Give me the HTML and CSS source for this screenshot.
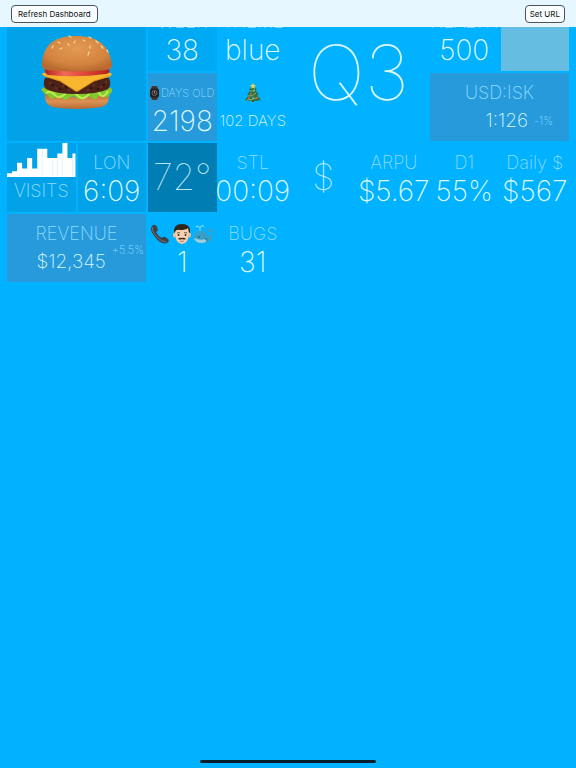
FILE: index.html
```html
<!DOCTYPE html>
<html lang="en">
<head>
<meta charset="utf-8">
<meta name="viewport" content="width=device-width, initial-scale=1">
<title>Dashboard</title>
<link rel="stylesheet" href="styles.css">
</head>
<body>
<header class="toolbar">
  <button type="button" class="button">Refresh Dashboard</button>
  <button type="button" class="button">Set URL</button>
</header>

<main class="board">
  <section class="tile tile-large tile-deep">
    <svg class="burger" viewBox="0 0 72 74" role="img" aria-label="Hamburger">
      <defs>
        <radialGradient id="bun" cx=".5" cy=".35" r=".65"><stop offset="0" stop-color="#e39a52"/><stop offset=".7" stop-color="#d3843f"/><stop offset="1" stop-color="#b96a30"/></radialGradient>
        <linearGradient id="base" x2="0" y2="1"><stop offset="0" stop-color="#bd7136"/><stop offset=".5" stop-color="#dc9153"/><stop offset="1" stop-color="#b56a35"/></linearGradient>
        <linearGradient id="tomato"><stop offset="0" stop-color="#b32219"/><stop offset=".3" stop-color="#f2695b"/><stop offset=".6" stop-color="#e2473c"/><stop offset="1" stop-color="#b32219"/></linearGradient>
      </defs>
      <path d="M4 59Q36 65 68 59Q69 69 61 72Q36 76 11 72Q3 69 4 59Z" fill="url(#base)"/>
      <path d="M2 53Q36 45 70 53Q73 56 69 59Q66 65 63 60Q59 59 56 63Q53 66 50 62Q45 60 42 63Q39 67 35 62Q31 60 28 63Q24 67 20 62Q15 60 13 63Q9 65 7 60Q4 60 2 57L0 55Z" fill="#83c82d"/>
      <path d="M5 58Q10 55 14 60T24 59T36 60T48 59T58 58T67 56" fill="none" stroke="#b9ef50" stroke-width="2"/>
      <path d="M4 43Q36 37 68 43Q71 50 67 54Q58 59 36 59T5 54Q1 50 4 43Z" fill="#4b2118"/>
      <g fill="#65311f"><circle cx="9" cy="48" r="1.500"/><circle cx="15" cy="53" r="1.500"/><circle cx="22" cy="51" r="1.500"/><circle cx="28" cy="55" r="1.500"/><circle cx="47" cy="55" r="1.500"/><circle cx="53" cy="50" r="1.500"/><circle cx="60" cy="52" r="1.500"/><circle cx="65" cy="47" r="1.500"/></g>
      <g fill="#28110e"><circle cx="12" cy="50" r="1"/><circle cx="19" cy="54" r="1"/><circle cx="25" cy="52" r="1"/><circle cx="50" cy="53" r="1"/><circle cx="57" cy="54" r="1"/><circle cx="63" cy="50" r="1"/></g>
      <path d="M2 38Q36 33 70 38Q72 40 68 42L53 46L37 56Q35 57 33 55L19 46L3 41Q0 39 2 38Z" fill="#f8b52e"/>
      <path d="M3 41L19 46L33 55Q35 57 37 56L53 46L69 41" fill="none" stroke="#e29018"/>
      <path d="M4 34Q36 31 68 34Q70 38 65 39Q36 43 7 40Q3 38 4 34Z" fill="url(#tomato)"/>
      <path d="M1 29C2 13 10 1 34 1C61 0 69 15 71 29Q72 34 65 35Q36 38 7 35Q0 34 1 29Z" fill="url(#bun)"/>
      <g stroke="#f4d69b" stroke-width="1.300" stroke-linecap="round"><path d="M17 7l2 1M12 11l-1 2M21 13l-2 1M28 1l2 1M34 6l-1 2M27 9l1 1M42 5l2 1M48 2l2 1M55 6l2 2M49 11v2M60 11l2 2M48 17l-1 3M66 15l1 2"/></g>
    </svg>
  </section>
  <section class="tile tile-soft"><h2 class="label">WEEK</h2><p class="value">38</p></section>
  <section class="tile"><h2 class="label">THEME</h2><p class="value">blue</p></section>
  <section class="tile tile-large"><p class="headline">Q3</p></section>
  <section class="tile"><h2 class="label">HEALTH</h2><p class="value">500</p></section>
  <section class="tile tile-pale"></section>

  <section class="tile tile-slate">
    <h2 class="label label-small">
      <svg class="watch" viewBox="0 0 9 14" role="img" aria-label="Watch"><path d="M2 0h5l1 3v8l-1 3H2l-1-3V3Z" fill="#44352f"/><rect y="2.500" width="9" height="9" rx="2" fill="#252024"/><circle cx="4.500" cy="7" r="2.500" fill="none" stroke="#8b8580" stroke-width=".7"/><path d="M4.500 5v2l1 1" fill="none" stroke="#d8c8b4" stroke-width=".6"/></svg>
      DAYS OLD
    </h2>
    <p class="value">2198</p>
  </section>
  <section class="tile">
    <svg class="tree" viewBox="0 0 16 20" role="img" aria-label="Christmas tree"><path d="M7 16h2v3H7Z" fill="#70452b"/><path d="M8 2L12 7L10.500 7L14 12L12 12L16 17Q8 19 0 17L4 12H2L5.500 7H4Z" fill="#2b7041"/><path d="M5 8q3 1 5-2M3 13q5 1 8-3M2 17q6 0 11-3" fill="none" stroke="#9bad58"/><path d="M8 0l1 2 2 .3-1.500 1.400.3 2L8 4.700l-1.800 1 .3-2L5 2.300 7 2Z" fill="#ecd35b"/><g fill="#e3574f"><circle cx="6" cy="11" r="1"/><circle cx="12" cy="15" r="1"/><circle cx="4" cy="15" r="1"/></g><g fill="#7fdded"><circle cx="9" cy="8" r=".8"/><circle cx="8" cy="15" r=".8"/></g></svg>
    <p class="value value-small">102 DAYS</p>
  </section>
  <section class="tile tile-wide tile-slate">
    <h2 class="label">USD:ISK</h2>
    <p class="rate"><span>1:126</span><small>-1%</small></p>
  </section>

  <section class="tile tile-deep tile-chart">
    <svg class="chart" viewBox="0 0 68 36" preserveAspectRatio="none" aria-hidden="true"><path d="M0 36V32H5V30H10V21H15V27H20V16H25V27H30V6H40V16H50V11H55V0H60V16H65V11H68V36Z" fill="#fff"/><path d="M35 7V35M45 18V35M50 18V35M55 12V35M65 18V35" stroke="#bfe8fa" stroke-width=".5"/></svg>
    <h2 class="label">VISITS</h2>
  </section>
  <section class="tile tile-deep"><h2 class="label">LON</h2><p class="value">6:09</p></section>
  <section class="tile tile-dark"><p class="figure">72°</p></section>
  <section class="tile"><h2 class="label">STL</h2><p class="value">00:09</p></section>
  <section class="tile"><p class="figure">$</p></section>
  <section class="tile"><h2 class="label">ARPU</h2><p class="value">$5.67</p></section>
  <section class="tile"><h2 class="label">D1</h2><p class="value">55%</p></section>
  <section class="tile"><h2 class="label">Daily $</h2><p class="value">$567</p></section>

  <section class="tile tile-wide tile-slate">
    <h2 class="label">REVENUE</h2>
    <p class="rate rate-raised"><span>$12,345</span><small>+5.5%</small></p>
  </section>
  <section class="tile">
    <div class="emoji-row">
      <svg viewBox="0 0 20 20" role="img" aria-label="Telephone"><path d="M2 2Q5-1 7 3L8 6Q7 8 6 8Q8 12 12 14Q13 12 15 13L18 15Q20 17 17 19Q11 21 5 13Q-1 6 2 2Z" fill="#3e4148"/><path d="M3 3Q1 7 7 13Q12 18 16 18" fill="none" stroke="#747780"/></svg>
      <svg viewBox="0 0 20 20" role="img" aria-label="Man with moustache"><path d="M2 9Q1 0 10 0T18 9L17 13H3Z" fill="#30251f"/><ellipse cx="2.500" cy="11" rx="1.500" ry="2.500" fill="#e9bf9b"/><ellipse cx="17.500" cy="11" rx="1.500" ry="2.500" fill="#e9bf9b"/><path d="M3 8Q4 5 8 6Q14 6 16 4L17 9Q17 19 10 20Q3 19 3 9Z" fill="#f3d0b0"/><path d="M5 9q2-1 3 0M12 9q2-1 3 0" fill="none" stroke="#332720" stroke-width=".7"/><path d="M6 15q2-2 4-1q2-1 4 1q-2 1-4 0q-2 1-4 0" fill="#332720"/><circle cx="6.500" cy="11" r=".9" fill="#33231d"/><circle cx="13.500" cy="11" r=".9" fill="#33231d"/><path d="M8 17q2 1 4 0" fill="none" stroke="#bd6554" stroke-width=".8"/></svg>
      <svg viewBox="0 0 20 20" role="img" aria-label="Spouting whale"><path d="M6 7V3M6 4Q4 1 2 3M6 4Q8 0 10 3" fill="none" stroke="#7fd4f0" stroke-width="1.200"/><path d="M0 13Q1 7 7 7Q12 7 14 12Q17 12 17 8Q13 8 12 5Q16 4 17 7Q18 4 20 5Q20 8 18 9Q20 16 14 18Q8 20 3 18Q0 16 0 13Z" fill="#3a9fc6"/><path d="M0 14Q6 17 12 15Q13 19 8 19Q1 19 0 14Z" fill="#9fcfe0"/><circle cx="5" cy="13" r=".8" fill="#17455f"/><path d="M10 14q4 0 3 3" fill="#247ba2"/></svg>
    </div>
    <p class="value">1</p>
  </section>
  <section class="tile"><h2 class="label">BUGS</h2><p class="value">31</p></section>
</main>

<div class="home-indicator" aria-hidden="true"></div>
</body>
</html>
```
FILE: styles.css
```css
* { box-sizing: border-box; }

body {
  margin: 0;
  min-height: 100vh;
  background: #00b2ff;
  color: #dcf8ff;
  font-family: Inter, "Liberation Sans", sans-serif;
}

h2, p { margin: 0; font-weight: 200; white-space: nowrap; }

.toolbar {
  position: fixed;
  inset: 0 0 auto;
  z-index: 1;
  display: flex;
  justify-content: space-between;
  align-items: center;
  height: 27px;
  padding: 0 11px;
  background: #e6f7ff;
}

.button {
  height: 18px;
  padding: 0 6px;
  border: 1px solid #4b5358;
  border-radius: 4px;
  background: #f8fdff;
  color: #111;
  font: 400 8px/16px Inter, sans-serif;
}
.button:last-child { padding: 0 4px; }

.board {
  display: grid;
  grid-template-columns: repeat(8, minmax(0, 1fr));
  grid-auto-rows: calc((100vw - 28px) / 8);
  gap: 2px;
  padding: 2px 7px;
}

.tile {
  display: flex;
  flex-direction: column;
  align-items: center;
  padding-top: 8px;
}

.tile-wide { grid-column: span 2; }
.tile-large { grid-column: span 2; grid-row: span 2; justify-content: center; padding: 0; }
.tile-soft { background: #00a9f3; }
.tile-deep { background: #02a2e8; }
.tile-slate { background: #269ada; }
.tile-dark { background: #007db3; }
.tile-pale { background: #66bde2; }
.tile-chart { padding: 0; }

.label { color: #8edcff; font-size: 18px; line-height: 24px; }
.label-small { display: flex; align-items: center; gap: 2px; font-size: 11px; }
.value { font-size: 28px; line-height: 32px; }
.value-small { font-size: 15px; }
.headline { font-size: 76px; font-weight: 100; line-height: 80px; }
.figure { font-size: 36px; font-weight: 100; line-height: 52px; }

.rate {
  display: flex;
  justify-content: flex-end;
  align-items: center;
  align-self: stretch;
  gap: 6px;
  padding-right: 16px;
  font-size: 19px;
  line-height: 32px;
}
.rate small { color: #8edcff; font-size: 11px; }
.rate-raised { padding-right: 2px; }
.rate-raised small { align-self: flex-start; line-height: 8px; }

.burger { width: 72px; height: 74px; }
.watch { width: 9px; height: 14px; }
.tree { width: 24px; height: 20px; margin: 2px 0; }
.chart { width: 100%; height: 34px; }
.tile-chart .label { line-height: 28px; }
.emoji-row { display: flex; gap: 2px; height: 24px; align-items: center; }
.emoji-row svg { width: 20px; height: 20px; }

.home-indicator {
  position: fixed;
  bottom: 5px;
  left: 50%;
  width: 176px;
  height: 3px;
  margin-left: -88px;
  border-radius: 2px;
  background: #04202c;
}
```
